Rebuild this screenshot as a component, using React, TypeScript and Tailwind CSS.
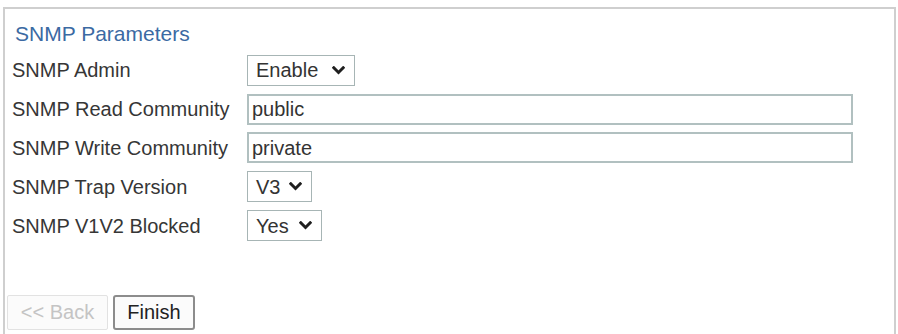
import React from "react";

const Chevron = () => (
  <svg width="13" height="9" viewBox="0 0 13 9" className="shrink-0">
    <path d="M1.8 1.8 L6.5 6.5 L11.2 1.8" fill="none" stroke="#1f1f1f" strokeWidth="3" strokeLinecap="square" />
  </svg>
);

const Select = ({ value, w }: { value: string; w: string }) => (
  <div
    className={`${w} h-[31px] border border-[#a7b5b5] bg-white flex items-center justify-between pl-[8px] pr-[9px] text-[20px] text-[#333]`}
  >
    <span className="leading-none">{value}</span>
    <Chevron />
  </div>
);

const Input = ({ value }: { value: string }) => (
  <div className="w-[606px] h-[31px] border-2 border-[#b1c0c0] bg-white flex items-center pl-[3px] text-[20px] text-[#333]">
    <span className="leading-none">{value}</span>
  </div>
);

const Row = ({ label, children }: { label: string; children: React.ReactNode }) => (
  <div className="flex items-center h-[38.8px]">
    <div className="w-[235px] text-[20px] text-[#363636] leading-none">{label}</div>
    {children}
  </div>
);

export default function App() {
  return (
    <div
      className="w-[898px] h-[334px] overflow-hidden bg-white pt-[7px] pl-[3px] pr-[2px]"
      style={{ fontFamily: '"Liberation Sans", Arial, sans-serif' }}
    >
      <div className="h-[360px] border-l-2 border-t-2 border-r-2 border-[#cfcfcf]">
        <div className="pl-[10px] pt-[11px] h-[37px] flex items-center text-[21px] text-[#3b6aa3] leading-none">
          SNMP Parameters
        </div>
        <div className="pl-[7px] pt-[5px]">
          <Row label="SNMP Admin">
            <Select value="Enable" w="w-[108px]" />
          </Row>
          <Row label="SNMP Read Community">
            <Input value="public" />
          </Row>
          <Row label="SNMP Write Community">
            <Input value="private" />
          </Row>
          <Row label="SNMP Trap Version">
            <Select value="V3" w="w-[65px]" />
          </Row>
          <Row label="SNMP V1V2 Blocked">
            <Select value="Yes" w="w-[75px]" />
          </Row>
        </div>
        <div className="flex gap-[5px] pl-[2px] mt-[50px]">
          <div className="w-[101px] h-[35px] border border-[#e2e2e2] rounded-[2px] bg-[#fbfbfb] flex items-center justify-center text-[20px] text-[#c4c4c4] leading-none">
            &lt;&lt; Back
          </div>
          <div className="w-[82px] h-[35px] border-2 border-[#8c8c8c] rounded-[3px] bg-[#fbfbfb] flex items-center justify-center text-[20px] text-[#222] leading-none">
            Finish
          </div>
        </div>
      </div>
    </div>
  );
}
